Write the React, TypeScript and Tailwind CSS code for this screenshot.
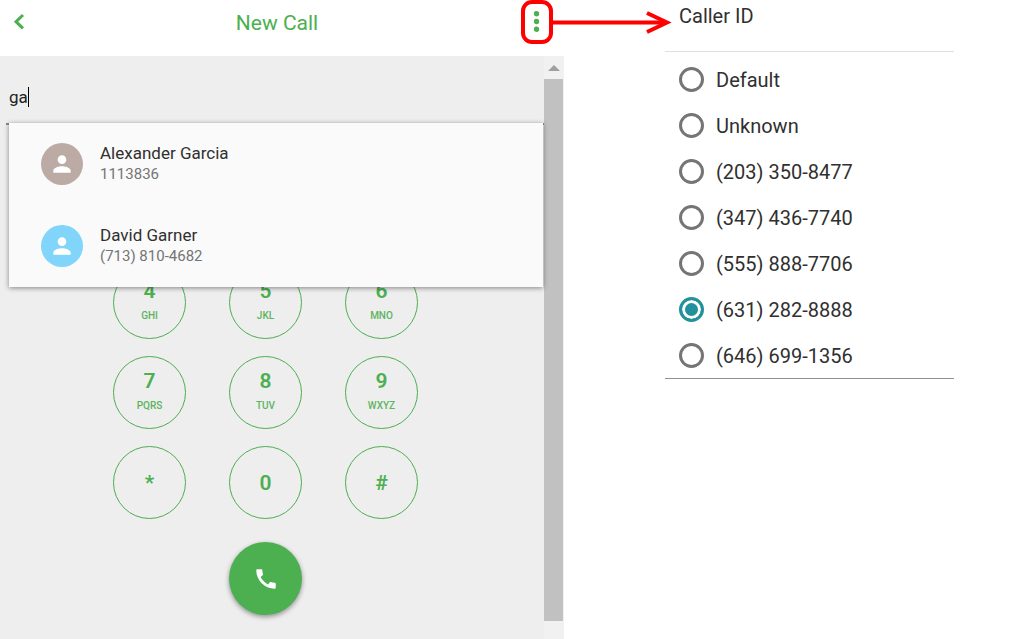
import { useState } from "react";
import { MdCall, MdPerson } from "react-icons/md";

type Contact = {
  name: string;
  phone: string;
  color: string;
};

const contacts: Contact[] = [
  { name: "Alexander Garcia", phone: "1113836", color: "bg-[#bcaaa4]" },
  { name: "David Garner", phone: "(713) 810-4682", color: "bg-[#81d4fa]" },
];

const keys = [
  { digit: "4", letters: "GHI" },
  { digit: "5", letters: "JKL" },
  { digit: "6", letters: "MNO" },
  { digit: "7", letters: "PQRS" },
  { digit: "8", letters: "TUV" },
  { digit: "9", letters: "WXYZ" },
  { digit: "*", letters: "" },
  { digit: "0", letters: "" },
  { digit: "#", letters: "" },
];

const callerIds = [
  "Default",
  "Unknown",
  "(203) 350-8477",
  "(347) 436-7740",
  "(555) 888-7706",
  "(631) 282-8888",
  "(646) 699-1356",
];

function DialerHeader() {
  return (
    <header className="flex h-14 items-start bg-white pr-[11px] text-[#4caf50]">
      <button
        type="button"
        aria-label="Back"
        className="flex h-11 w-[33px] items-center pl-3"
      >
        <svg width="14" height="18" viewBox="0 0 14 18" fill="none">
          <path d="M11 2 4 8.7l7 6.7" stroke="currentColor" strokeWidth="3" />
        </svg>
      </button>
      <h1 className="flex-1 text-center text-[21px] leading-[46px]">
        New Call
      </h1>
      <div className="relative">
        <button
          type="button"
          aria-label="More options"
          className="flex h-11 w-8 items-center justify-center rounded-[11px] border-4 border-[#ff0000]"
        >
          <svg width="6" height="22" viewBox="0 0 6 22" fill="currentColor">
            <circle cx="2.5" cy="2.7" r="2.7" />
            <circle cx="2.5" cy="10.5" r="2.7" />
            <circle cx="2.5" cy="18.3" r="2.7" />
          </svg>
        </button>
        {/* arrow from the menu button to the caller ID list */}
        <svg
          className="absolute top-2.5 left-full"
          width="119"
          height="26"
          viewBox="0 0 119 26"
          fill="none"
        >
          <path d="M0 12.5H110" stroke="#ff0000" strokeWidth="4" />
          <path d="M94 3 114 12.5 94 22" stroke="#ff0000" strokeWidth="4" />
        </svg>
      </div>
    </header>
  );
}

function Suggestions() {
  return (
    <ul className="absolute top-[67px] right-px left-[9px] bg-[#fafafa] shadow-[0_1px_5px_rgba(0,0,0,0.45)]">
      {contacts.map((contact) => (
        <li key={contact.name}>
          <button
            type="button"
            className="flex h-[82px] w-full items-center gap-[17px] pl-8 text-left"
          >
            <span
              className={`flex size-[42px] items-center justify-center rounded-full text-white ${contact.color}`}
            >
              <MdPerson size={26} />
            </span>
            <span>
              <span className="block text-[17px] leading-5 text-[#303030]">
                {contact.name}
              </span>
              <span className="block text-[15px] leading-[22px] text-[#757575]">
                {contact.phone}
              </span>
            </span>
          </button>
        </li>
      ))}
    </ul>
  );
}

function Keypad() {
  return (
    <div className="flex flex-col items-center pr-[13px] pb-[23px] text-[#4caf50]">
      <div className="grid grid-cols-3 gap-x-[43px] gap-y-[17px]">
        {keys.map((key) => (
          <button
            key={key.digit}
            type="button"
            className="flex size-[73px] flex-col items-center justify-center rounded-full border border-[#4caf50]"
          >
            <span className="text-[21px] leading-6 font-semibold">
              {key.digit}
            </span>
            {key.letters && (
              <span className="mt-[5px] mb-[3px] text-[10px] leading-4 font-medium opacity-90">
                {key.letters}
              </span>
            )}
          </button>
        ))}
      </div>
      <button
        type="button"
        aria-label="Call"
        className="mt-[23px] flex size-[73px] items-center justify-center rounded-full bg-[#4caf50] text-white shadow-[0_2px_5px_rgba(0,0,0,0.4)]"
      >
        <MdCall size={26} />
      </button>
    </div>
  );
}

function Scrollbar() {
  return (
    <div className="w-5 bg-[#f1f1f1] pr-px" aria-hidden="true">
      <div className="flex h-[23px] items-center justify-center">
        <svg width="12" height="6" viewBox="0 0 12 6" fill="#a0a0a0">
          <path d="M6 0 12 6H0z" />
        </svg>
      </div>
      <div className="h-[542px] bg-[#c1c1c1]" />
    </div>
  );
}

function CallerIdList() {
  const [selected, setSelected] = useState("(631) 282-8888");

  return (
    <fieldset className="border-b border-[#8f8f8f] text-xl text-[#303030]">
      <legend className="w-full border-b border-[#e0e0e0] pt-1 pb-[23px] pl-3.5 leading-6">
        Caller ID
      </legend>
      <div className="pt-1">
        {callerIds.map((id) => (
          <label key={id} className="flex h-[46px] items-center gap-3 pl-3.5">
            <input
              type="radio"
              name="callerId"
              value={id}
              checked={selected === id}
              onChange={() => setSelected(id)}
              className="size-[25px] appearance-none rounded-full border-3 border-[#757575] checked:border-[#21919b] checked:bg-[#21919b] checked:shadow-[inset_0_0_0_3px_white]"
            />
            <span className="pt-0.5">{id}</span>
          </label>
        ))}
      </div>
    </fieldset>
  );
}

export default function App() {
  const [query, setQuery] = useState("ga");

  return (
    <div className="grid min-h-screen grid-cols-[564fr_101fr_289fr_56fr] bg-white font-[Roboto,sans-serif]">
      <main className="flex flex-col">
        <DialerHeader />
        <div className="flex flex-1 bg-[#eeeeee]">
          <div className="relative flex-1">
            <div className="ml-1.5 flex h-[69px] items-center border-b-2 border-[#78909c] pt-3.5 pl-[3px]">
              <input
                type="text"
                aria-label="Name or number"
                value={query}
                onChange={(event) => setQuery(event.target.value)}
                className="field-sizing-content text-[17px] leading-5 text-[#212121] caret-transparent outline-none"
              />
              <span className="h-5 w-px bg-black" />
            </div>
            <Suggestions />
            <div className="mt-[141px]">
              <Keypad />
            </div>
          </div>
          <Scrollbar />
        </div>
      </main>
      <aside className="col-start-3">
        <CallerIdList />
      </aside>
    </div>
  );
}
